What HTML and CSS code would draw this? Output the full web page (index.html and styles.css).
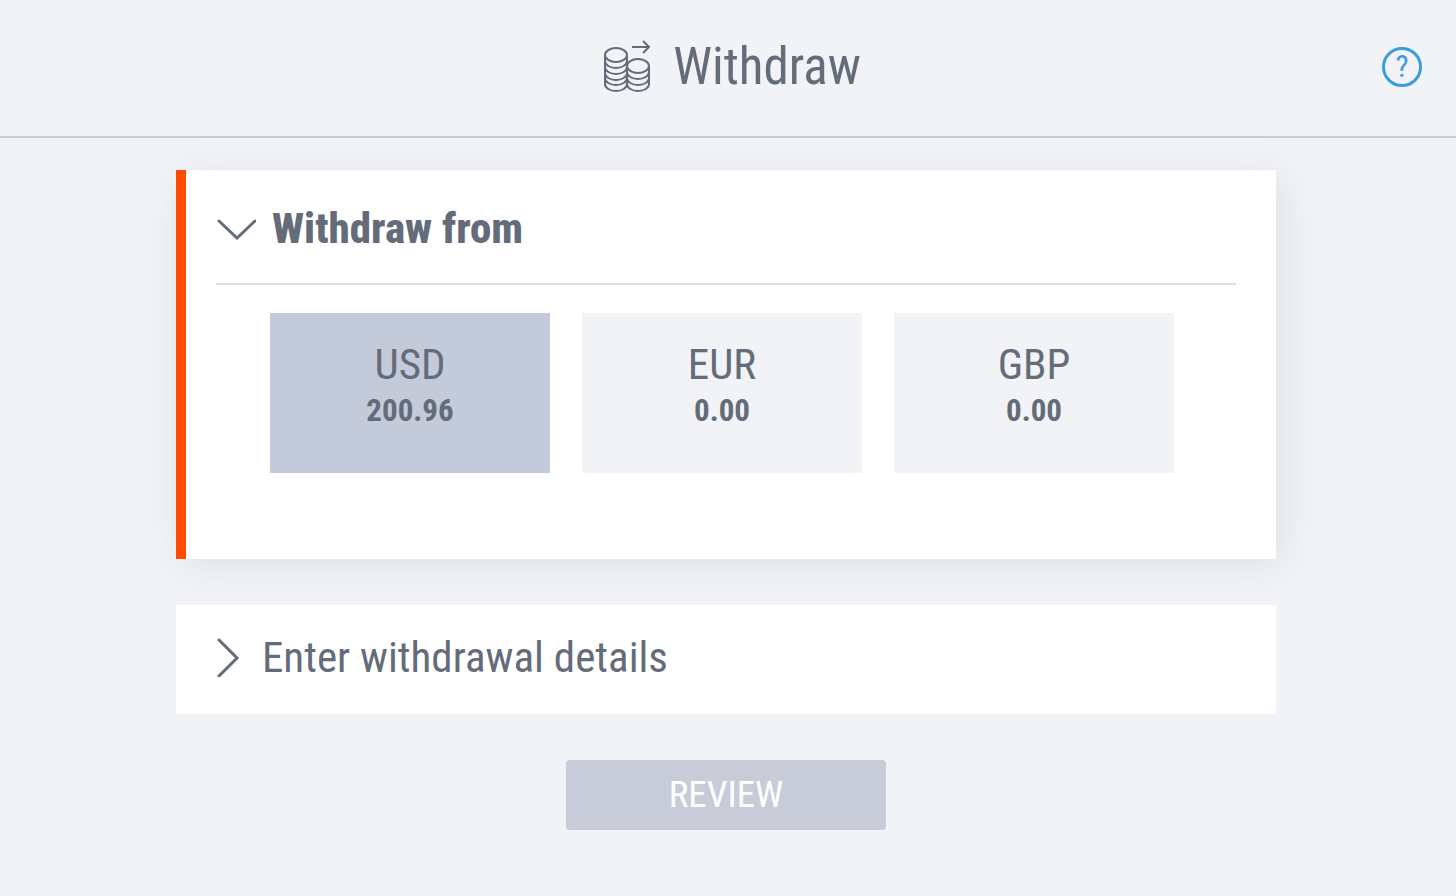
FILE: index.html
```html
<!DOCTYPE html>
<html lang="en">
<head>
    <meta charset="UTF-8">
    <meta name="viewport" content="width=device-width, initial-scale=1">
    <title>Withdraw</title>
    <link rel="stylesheet" href="styles.css">
</head>
<body>
    <header class="header">
        <div class="title">
            <svg class="coins" viewBox="0 0 48 54" aria-hidden="true">
                <ellipse cx="13" cy="15" rx="11" ry="7"/>
                <path d="M2 15v29c0 4 5 7 11 7s11-3 11-7V15"/>
                <path d="M2 21c0 4 5 7 11 7s11-3 11-7M2 27c0 4 5 7 11 7s11-3 11-7M2 33c0 4 5 7 11 7s11-3 11-7M2 38c0 4 5 7 11 7s11-3 11-7"/>
                <ellipse cx="35" cy="26" rx="11" ry="7"/>
                <path d="M24 26v18c0 4 5 7 11 7s11-3 11-7V26"/>
                <path d="M24 32c0 4 5 7 11 7s11-3 11-7M24 38c0 4 5 7 11 7s11-3 11-7"/>
                <path d="M29 7h17M40 1l6 6-6 6"/>
            </svg>
            <h1>Withdraw</h1>
        </div>
        <button class="help" type="button" aria-label="Help">?</button>
    </header>

    <main class="container">
        <section class="card active">
            <h2>
                <button class="toggle" type="button" aria-expanded="true">
                    <svg class="arrow-down" viewBox="0 0 40 24" aria-hidden="true"><path d="M3 5l18 17L39 5"/></svg>
                    Withdraw from
                </button>
            </h2>
            <div class="accounts">
                <button class="account selected" type="button">
                    <span class="currency">USD</span>
                    <span class="balance">200.96</span>
                </button>
                <button class="account" type="button">
                    <span class="currency">EUR</span>
                    <span class="balance">0.00</span>
                </button>
                <button class="account" type="button">
                    <span class="currency">GBP</span>
                    <span class="balance">0.00</span>
                </button>
            </div>
        </section>

        <section class="card">
            <h2>
                <button class="toggle" type="button" aria-expanded="false">
                    <svg class="arrow-right" viewBox="0 0 24 40" aria-hidden="true"><path d="M3 3l18 18L3 39"/></svg>
                    Enter withdrawal details
                </button>
            </h2>
        </section>

        <button class="review" type="button" disabled>REVIEW</button>
    </main>
</body>
</html>
```
FILE: styles.css
```css
:root {
    --text: #646c79;
    --bg: #f1f3f7;
    --orange: #ff4b00;
    --blue: #3b9ddd;
}
* {
    box-sizing: border-box;
}
body {
    margin: 0;
    background: var(--bg);
    color: var(--text);
    font-family: "Roboto Condensed", "Liberation Sans Narrow", Roboto, sans-serif;
    font-weight: 450;
}
h1, h2 {
    margin: 0;
    font-weight: 450;
}
button {
    border: none;
    padding: 0;
    background: none;
    color: inherit;
    font: inherit;
    cursor: pointer;
}
svg {
    flex: none;
    fill: none;
    stroke: currentColor;
    stroke-width: 2;
}
.header {
    display: grid;
    grid-template-columns: 1fr auto 1fr;
    align-items: center;
    padding: 37px 34px 39px 42px;
    border-bottom: 2px solid #c8cdd8;
}
.title {
    grid-column: 2;
    display: flex;
    align-items: center;
    gap: 22px;
}
.title h1 {
    font-size: 51px;
    line-height: 60px;
}
.coins {
    width: 48px;
    height: 54px;
}
.help {
    justify-self: end;
    width: 40px;
    height: 40px;
    border: 3px solid var(--blue);
    border-radius: 50%;
    color: var(--blue);
    font-size: 31px;
    line-height: 34px;
}
.container {
    display: flex;
    flex-direction: column;
    gap: 46px;
    padding: 32px 180px 40px 176px;
}
.card {
    padding: 22px 40px 27px;
    background: white;
}
.card.active {
    padding: 28px 40px 86px 30px;
    border-left: 10px solid var(--orange);
    box-shadow: 6px 6px 40px rgba(0,0,0,0.08);
}
.toggle {
    display: flex;
    align-items: center;
    gap: 22px;
    width: 100%;
    font-size: 43px;
    line-height: 60px;
    text-align: left;
}
.toggle svg {
    stroke-width: 3;
    stroke-linecap: round;
}
.active .toggle {
    gap: 16px;
    padding-bottom: 25px;
    border-bottom: 2px solid #d8dde8;
    font-weight: 800;
}
.arrow-down {
    width: 40px;
    height: 24px;
}
.arrow-right {
    width: 24px;
    height: 40px;
}
.accounts {
    display: grid;
    grid-template-columns: repeat(3, 1fr);
    gap: 32px;
    padding: 28px 62px 0 54px;
}
.account {
    display: flex;
    flex-direction: column;
    align-items: center;
    padding: 26px 0 40px;
    background: var(--bg);
}
.account.selected {
    background: #c3cad9;
}
.currency {
    font-size: 43px;
    line-height: 50px;
}
.balance {
    font-size: 31px;
    line-height: 44px;
    font-weight: 700;
}
.review {
    align-self: center;
    width: 320px;
    border-radius: 4px;
    background: #c8ccd8;
    color: white;
    font-size: 37px;
    line-height: 70px;
}
```
